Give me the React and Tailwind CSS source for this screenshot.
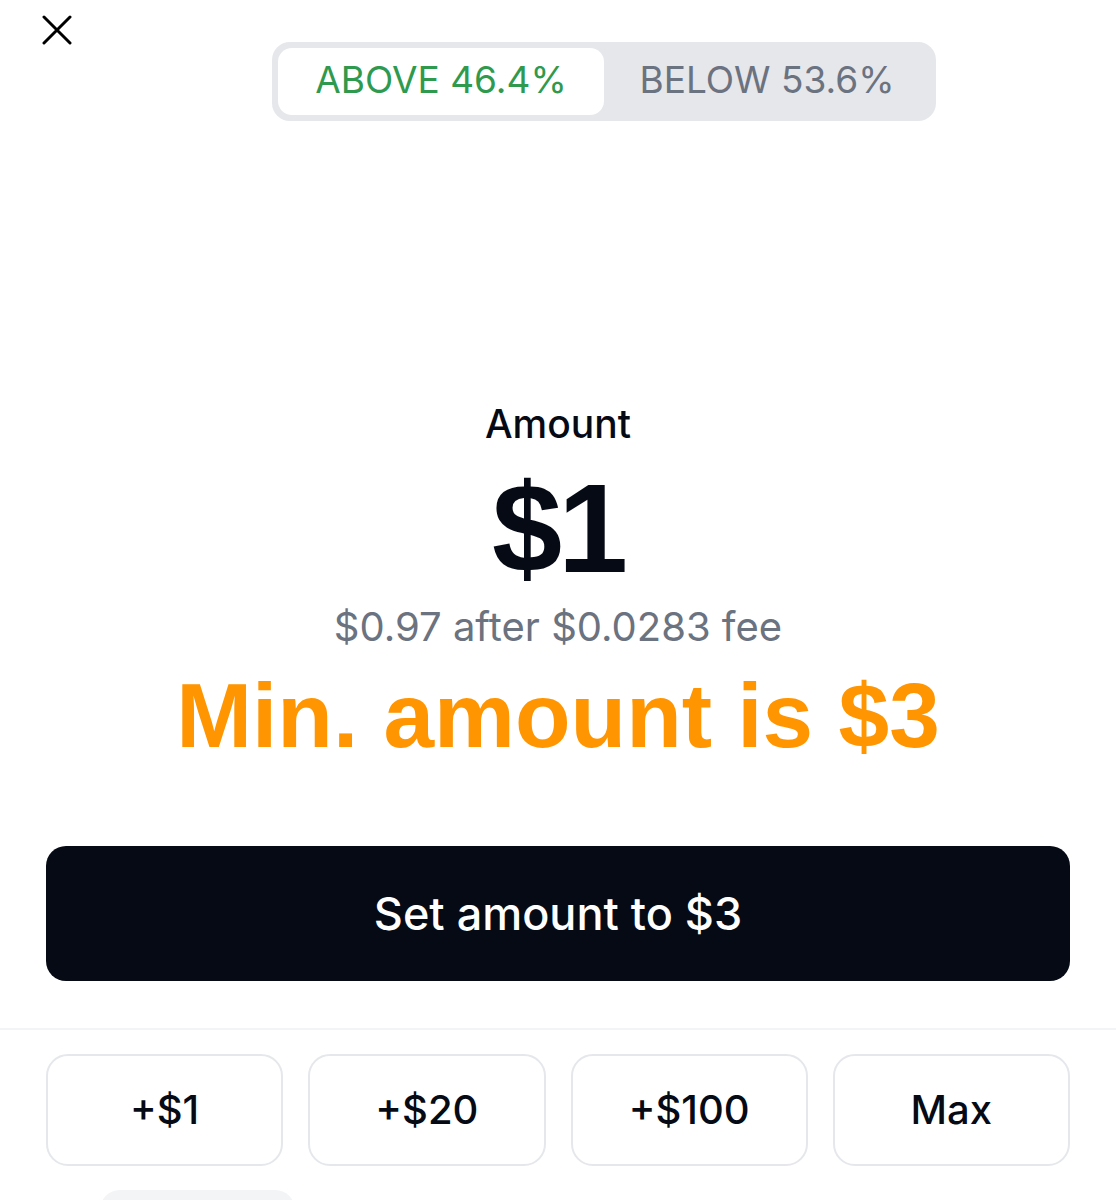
import React from 'react';

function CloseIcon() {
  return (
    <svg width="30" height="30" viewBox="0 0 30 30" fill="none" stroke="#000" strokeWidth="3" strokeLinecap="round">
      <path d="M2 2 L28 28 M28 2 L2 28" />
    </svg>
  );
}

export default function App() {
  const quick = ['+$1', '+$20', '+$100', 'Max'];

  return (
    <div className="h-[1200px] w-[1116px] overflow-hidden bg-white font-['Inter',sans-serif]">
      <div className="relative h-[122px]">
        <button className="absolute left-[42px] top-[15px]">
          <CloseIcon />
        </button>
        <div className="absolute left-[272px] top-[42px] flex h-[79px] w-[664px] rounded-[18px] bg-[#e5e7eb] p-[6px]">
          <div className="flex flex-1 items-center justify-center rounded-[14px] bg-white pb-[3px] text-[37px] text-[#2f9a4e]">
            ABOVE 46.4%
          </div>
          <div className="flex flex-1 items-center justify-center pb-[3px] text-[37px] text-[#6b7280]">
            BELOW 53.6%
          </div>
        </div>
      </div>

      <div className="flex flex-col items-center pt-[277px]">
        <div className="text-[39px] font-medium leading-[50px] text-[#050a14]">Amount</div>
        <div className="mt-[20px] font-['Liberation_Sans',sans-serif] text-[126px] font-bold leading-[120px] tracking-[-4px] text-[#050a14]">
          $1
        </div>
        <div className="mt-[13px] text-[40px] leading-[50px] text-[#6b7280]">$0.97 after $0.0283 fee</div>
        <div className="mt-[14px] font-['Liberation_Sans',sans-serif] text-[91px] font-bold leading-[100px] text-[#ff9500]">
          Min. amount is $3
        </div>
      </div>

      <div className="px-[46px] pt-[80px]">
        <button className="flex h-[135px] w-full items-center justify-center rounded-[20px] bg-[#050a14] text-[45px] font-medium text-white">
          Set amount to $3
        </button>
      </div>

      <div className="mt-[47px] border-t-2 border-[#f3f4f6]" />

      <div className="grid grid-cols-4 gap-[25px] px-[46px] pt-[24px]">
        {quick.map((q) => (
          <button
            key={q}
            className="flex h-[112px] items-center justify-center rounded-[22px] border-2 border-[#e5e7eb] bg-white text-[40px] font-medium text-[#050a14]"
          >
            {q}
          </button>
        ))}
      </div>

      <div className="ml-[100px] mt-[24px] h-[40px] w-[195px] rounded-[24px] bg-[#f3f4f6]" />
    </div>
  );
}
